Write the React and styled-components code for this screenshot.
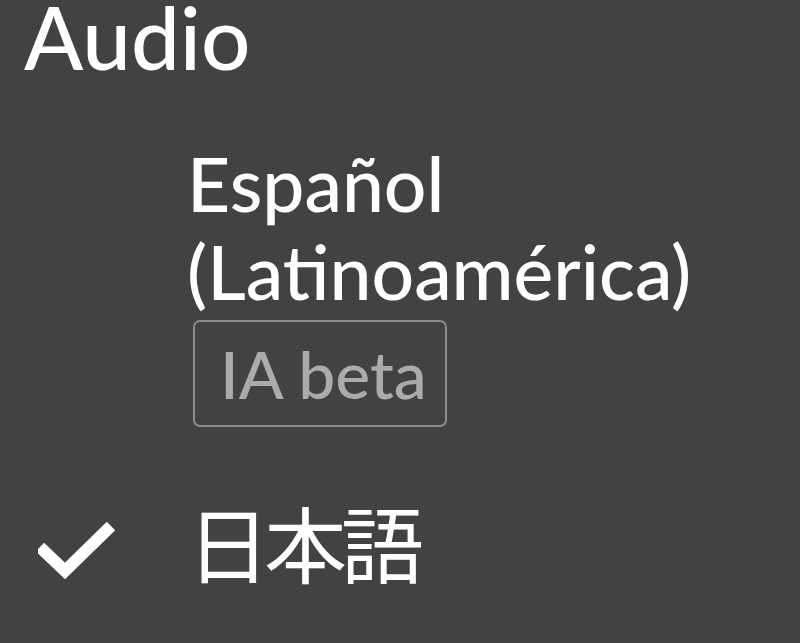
import React from "react";
import styled, { createGlobalStyle } from "styled-components";

const Global = createGlobalStyle`
  html, body { margin: 0; padding: 0; background: #424242; }
  body { width: 800px; height: 643px; overflow: hidden; }
`;

const Panel = styled.div`
  box-sizing: border-box;
  width: 800px;
  height: 643px;
  background: #424242;
  padding: 5px 0 0 24px;
  font-family: Lato, "Noto Sans", sans-serif;
  color: #ffffff;
  display: flex;
  flex-direction: column;
`;

const Title = styled.h2`
  margin: 0;
  font-size: 87px;
  line-height: 64px;
  font-weight: 500;
  color: #ffffff;
`;

const List = styled.ul`
  list-style: none;
  margin: 70px 0 0;
  padding: 0;
  display: flex;
  flex-direction: column;
  gap: 73px;
`;

const Item = styled.li`
  display: grid;
  grid-template-columns: 163px 1fr;
  align-items: start;
`;

const CheckCell = styled.div`
  display: flex;
  padding: 10px 0 0 14px;
`;

const Body = styled.div`
  display: flex;
  flex-direction: column;
  align-items: flex-start;
`;

const Label = styled.div`
  font-size: 75px;
  line-height: 88px;
  font-weight: 500;
`;

const CjkLabel = styled.div`
  font-family: "Noto Sans CJK JP", sans-serif;
  font-size: 83px;
  line-height: 83px;
  letter-spacing: -6px;
  font-weight: 400;
`;

const Badge = styled.span`
  margin: 5px 0 0 6px;
  box-sizing: border-box;
  height: 107px;
  width: 254px;
  border: 2px solid #8c8c8c;
  border-radius: 7px;
  padding: 0 0 0 25px;
  font-size: 66px;
  line-height: 103px;
  font-weight: 500;
  color: #ababab;
`;

const Check = () => (
  <svg width="90" height="70" viewBox="0 0 90 70" aria-hidden="true">
    <polyline
      points="2,37 27,61 73,16"
      fill="none"
      stroke="#ffffff"
      strokeWidth="12"
      strokeLinecap="butt"
      strokeLinejoin="miter"
    />
  </svg>
);

export default function App() {
  return (
    <>
      <Global />
      <Panel>
        <Title>Audio</Title>
        <List>
          <Item>
            <CheckCell />
            <Body>
              <Label>
                Español
                <br />
                (Latinoamérica)
              </Label>
              <Badge>IA beta</Badge>
            </Body>
          </Item>
          <Item>
            <CheckCell>
              <Check />
            </CheckCell>
            <Body>
              <CjkLabel>日本語</CjkLabel>
            </Body>
          </Item>
        </List>
      </Panel>
    </>
  );
}
